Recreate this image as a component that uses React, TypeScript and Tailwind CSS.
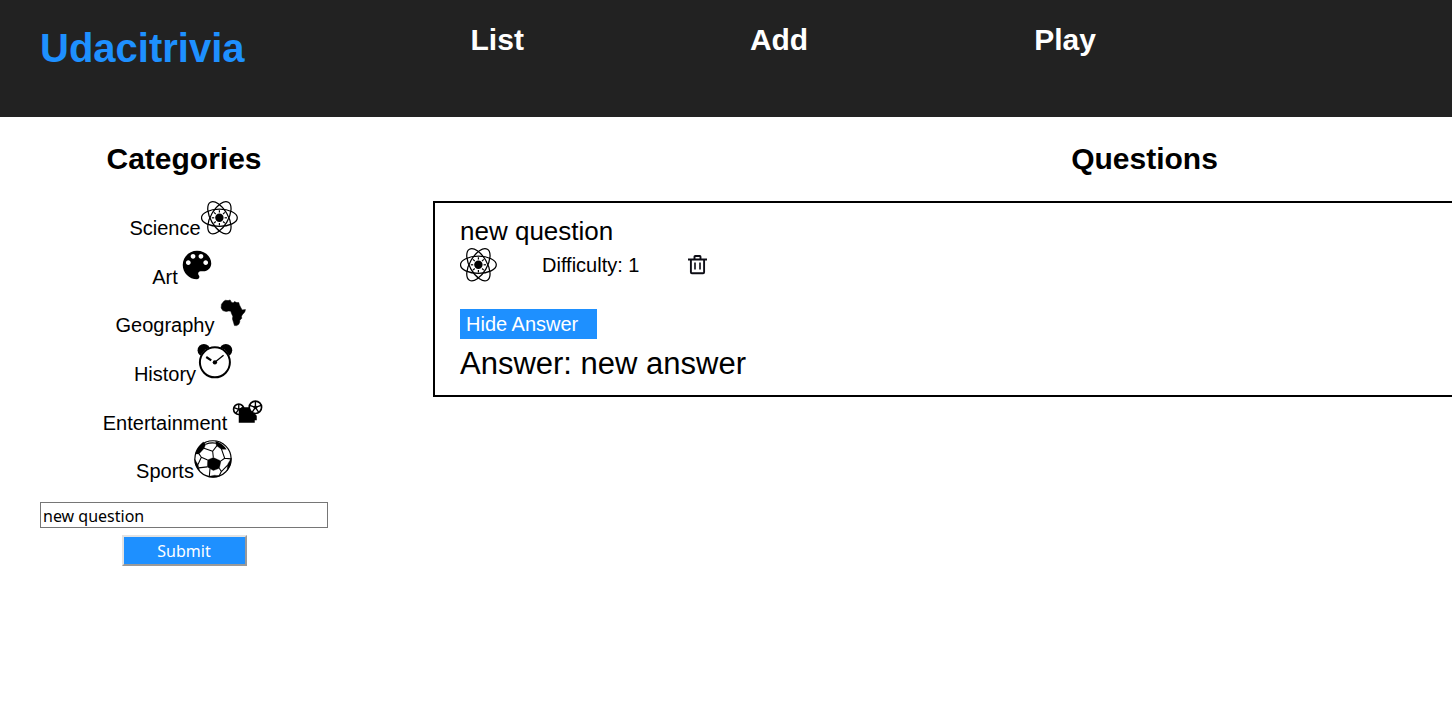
import { useState } from "react";
import type { ReactNode } from "react";

function Icon({ children, className = "inline align-baseline" }: { children: ReactNode; className?: string }) {
  return (
    <svg viewBox="0 0 38 38" className={`h-[38px] w-[38px] ${className}`} aria-hidden="true">
      {children}
    </svg>
  );
}

function Atom() {
  return (
    <g transform="translate(18.4 20.8)" fill="none" stroke="#000">
      {[0, 60, 120].map((a) => (
        <ellipse key={a} rx="17.9" ry="8.6" strokeWidth="1.25" transform={`rotate(${a})`} />
      ))}
      {[0, 45, 90, 135, 180, 225, 270, 315].map((a) => (
        <path key={a} d="M5.2 0H7.6" strokeWidth="1.2" transform={`rotate(${a})`} />
      ))}
      <circle r="4.2" fill="#000" stroke="none" />
    </g>
  );
}

function Palette() {
  return (
    <path
      transform="scale(1.5833)"
      d="M12 3c-4.97 0-9 4.03-9 9s4.03 9 9 9c.83 0 1.5-.67 1.5-1.5 0-.39-.15-.74-.39-1.01-.23-.26-.38-.61-.38-.99 0-.83.67-1.5 1.5-1.5H16c2.76 0 5-2.24 5-5 0-4.42-4.03-8-9-8zm-5.5 9c-.83 0-1.5-.67-1.5-1.5S5.67 9 6.5 9 8 9.67 8 10.5 7.33 12 6.5 12zm3-4C8.67 8 8 7.33 8 6.5S8.67 5 9.5 5s1.5.67 1.5 1.5S10.33 8 9.5 8zm5 0c-.83 0-1.5-.67-1.5-1.5S13.67 5 14.5 5s1.5.67 1.5 1.5S15.33 8 14.5 8zm3 4c-.83 0-1.5-.67-1.5-1.5S16.67 9 17.5 9s1.5.67 1.5 1.5-.67 1.5-1.5 1.5z"
    />
  );
}

function Africa() {
  return (
    <path
      transform="translate(-9.2 -4.4) scale(.3333)"
      stroke="#000"
      strokeWidth="1.5"
      strokeLinejoin="round"
      d="M57 35L62 32L70 33L76 31L79 37L85 40L89 36L96 39L102 39L104 46L108 54L112 61L122 60L120 67L112 76L110 81L111 86L105 92L105 97L102 104L96 108L89 108L86 98L83 88L84 80L80 72L78 65L72 64L64 66L54 63L49 55L50 44Z"
    />
  );
}

function Clock() {
  return (
    <g transform="translate(-11.1 -8) scale(.3333)">
      <circle cx="57" cy="46" r="19" />
      <circle cx="123" cy="46" r="19" />
      <circle cx="90" cy="82" r="47" fill="#fff" />
      <circle cx="90" cy="82" r="45" fill="#fff" stroke="#000" strokeWidth="6" />
      <path d="M90 82L116 61" stroke="#000" strokeWidth="4" />
      <path d="M64 66L79 76" stroke="#000" strokeWidth="6.5" />
      <circle cx="90" cy="82" r="6.5" />
    </g>
  );
}

function Projector() {
  return (
    <g transform="translate(-7.25 -1.7) scale(.3333)" fill="none" stroke="#000">
      <circle cx="57" cy="57" r="15.5" strokeWidth="5" />
      <path d="M57 57V42M57 57L43 52M57 57L71 52M57 57L48 69" strokeWidth="4" />
      <circle cx="107" cy="51" r="18.5" strokeWidth="5" />
      <path d="M107 51V33M107 51L90 45M107 51L124 45M107 51L97 66M107 51L117 66" strokeWidth="4" />
      <circle cx="107" cy="51" r="5" fill="#000" />
      <path d="M57 57L66 51H88L94 64L106 71L111 76V90H105V97H57Z" fill="#000" stroke="none" />
    </g>
  );
}

function Ball() {
  return (
    <g transform="translate(-12 -8.1) scale(.3333)" stroke="#000">
      <circle cx="93" cy="81" r="54.5" fill="#fff" strokeWidth="3.5" />
      <path
        d="M77 84L94 77L117 87L112 109L94 116L76 105ZM101 28Q122 34 133 52L118 52L103 41ZM40 66Q45 44 64 30L71 37L66 50L51 66ZM148 78Q149 100 135 117L137 97ZM38 82L48 98L53 117Q39 104 38 82ZM78 134L98 130L114 132Q95 139 78 134Z"
        strokeWidth="1"
      />
      <path
        d="M94 77L92 58M117 87L128 79M112 109L118 119M84 110L82 133M77 84L58 76M92 58L66 49M92 58L105 41M118 50L128 79L147 81M76 105L50 108M58 76L51 66M58 76L48 98M118 119L137 100M118 119L112 131M71 37Q86 31 103 34"
        fill="none"
        strokeWidth="3.2"
      />
    </g>
  );
}

function TrashIcon() {
  return (
    <svg viewBox="0 0 19 20" className="h-5 w-[19px]" fill="none" stroke="#0c0c14" strokeWidth="1.9" aria-hidden="true">
      <path d="M0 4.5H19M6.5 4.500V1.700Q6.500 1 7.200 1H11.800Q12.500 1 12.500 1.700V4.500M2.900 4.500V17.200Q2.900 18.200 3.900 18.200H15.100Q16.100 18.200 16.100 17.200V4.500" />
      <path d="M7 7.500V14.500M12 7.500V14.500" strokeWidth="1.600" />
    </svg>
  );
}

const categories = [
  { name: "Science", art: <Atom /> },
  { name: "Art", art: <Palette /> },
  { name: "Geography", art: <Africa /> },
  { name: "History", art: <Clock /> },
  { name: "Entertainment", art: <Projector /> },
  { name: "Sports", art: <Ball /> },
];

function Header() {
  return (
    <header className="flex h-[117px] items-start gap-[226px] bg-[#222] pt-[23px] pl-10 font-bold text-white">
      <h1 className="mt-0.5 text-[40px] leading-[46px] text-[#1e90ff]">Udacitrivia</h1>
      <nav className="flex gap-[226px] text-[30px] leading-[34px]">
        <a href="#list">List</a>
        <a href="#add">Add</a>
        <a href="#play">Play</a>
      </nav>
    </header>
  );
}

function Sidebar() {
  return (
    <aside className="ml-10 w-72 shrink-0 text-center">
      <h2 className="text-[30px] leading-[34px] font-bold">Categories</h2>
      <ul className="mt-[21px] grid h-[292px] grid-rows-6 text-xl leading-5">
        {categories.map((c) => (
          <li key={c.name} className="min-h-0 cursor-pointer">
            {c.name}
            <Icon>{c.art}</Icon>
          </li>
        ))}
      </ul>
      <form className="mt-[13px] font-['Noto_Sans',sans-serif] text-base" onSubmit={(e) => e.preventDefault()}>
        <input
          aria-label="Search questions"
          defaultValue="new question"
          className="block h-[26px] w-full border border-[#767676] bg-white px-0.5 pt-0.5 leading-5"
        />
        <button
          type="submit"
          className="mx-auto mt-[7px] block h-[31px] w-[125px] border-2 border-t-[#e3e3e3] border-r-[#999] border-b-[#999] border-l-[#e3e3e3] bg-[#1e90ff] leading-5 text-white"
        >
          Submit
        </button>
      </form>
    </aside>
  );
}

function Question() {
  const [open, setOpen] = useState(true);
  return (
    <article className="mt-[25px] border-2 border-black px-[25px] pt-[13px] pb-[14px]">
      <h3 className="text-[26px] leading-[30px]">new question</h3>
      <div className="flex h-[38px] items-center text-xl">
        <Icon className="mb-1 block">
          <Atom />
        </Icon>
        <span className="ml-11">Difficulty: 1</span>
        <button type="button" aria-label="Delete question" className="ml-[49px] cursor-pointer">
          <TrashIcon />
        </button>
      </div>
      <button
        type="button"
        className="mt-[25px] block h-[30px] w-[137px] cursor-pointer bg-[#1e90ff] pl-1.5 text-left text-xl leading-[30px] text-white"
        onClick={() => setOpen(!open)}
      >
        {open ? "Hide Answer" : "Show Answer"}
      </button>
      {open && <p className="mt-[7px] text-[31px] leading-[35px]">Answer: new answer</p>}
    </article>
  );
}

export default function App() {
  return (
    <div className="min-h-screen overflow-hidden bg-white font-['Liberation_Sans',Arial,sans-serif] text-black">
      <Header />
      <main className="flex pt-[25px]">
        <Sidebar />
        <section className="ml-[105px] w-[98%] shrink-0">
          <h2 className="text-center text-[30px] leading-[34px] font-bold">Questions</h2>
          <Question />
        </section>
      </main>
    </div>
  );
}
